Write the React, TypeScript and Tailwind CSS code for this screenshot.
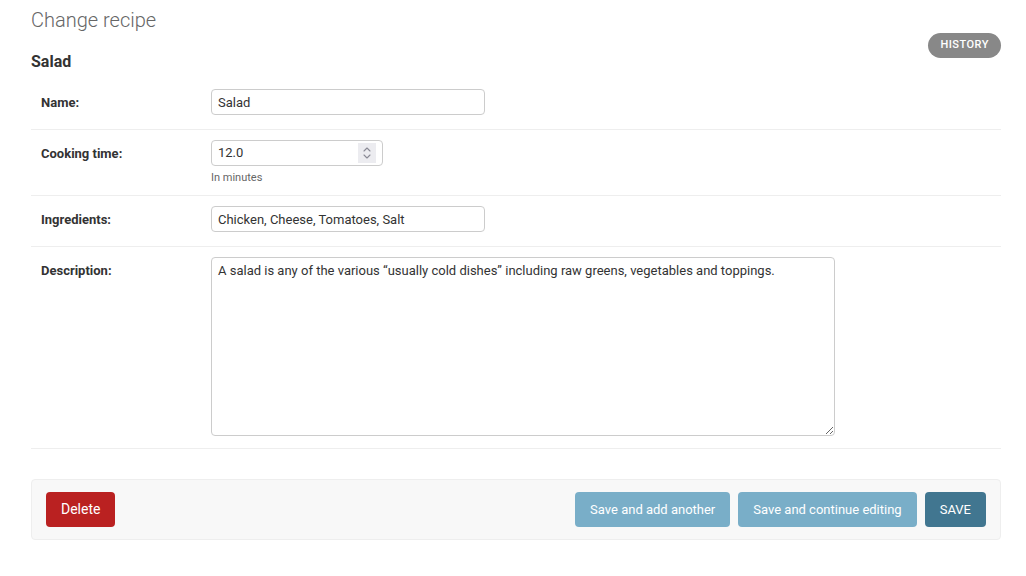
import { useState } from 'react';

const font = { fontFamily: 'Roboto, "Liberation Sans", sans-serif' };

function Row({ label, children, pb = 'pb-[14px]' }: { label: string; children: React.ReactNode; pb?: string }) {
  return (
    <div className={`flex px-[10px] pt-[10px] ${pb} border-b border-[#eee]`}>
      <label className="w-[170px] shrink-0 pt-[6px] text-[13px] font-bold leading-[16px] text-[#333]">{label}</label>
      <div className="flex flex-col">{children}</div>
    </div>
  );
}

export default function App() {
  const [name, setName] = useState('Salad');
  const [time, setTime] = useState('12.0');
  const [ingredients, setIngredients] = useState('Chicken, Cheese, Tomatoes, Salt');
  const [desc, setDesc] = useState(
    'A salad is any of the various \u201cusually cold dishes\u201d including raw greens, vegetables and toppings.'
  );

  const inputCls =
    'h-[26px] rounded-[4px] border border-[#ccc] px-[6px] text-[13px] text-[#333] outline-none bg-white';

  return (
    <div className="min-h-[576px] bg-white pl-[31px] pr-[25px] pt-[8px]" style={font}>
      <h1 className="text-[20px] font-light leading-[24px] text-[#666]">Change recipe</h1>

      <div className="mt-[1px] flex justify-end">
        <button className="h-[25px] rounded-full bg-[#888] px-[12px] text-[11px] font-medium tracking-[0.5px] text-white">
          HISTORY
        </button>
      </div>

      <h2 className="-mt-[6px] text-[16px] font-bold leading-[20px] text-[#333]">Salad</h2>

      <div className="mt-[7px]">
        <Row label="Name:">
          <input className={`${inputCls} w-[274px]`} value={name} onChange={(e) => setName(e.target.value)} />
        </Row>
        <Row label="Cooking time:" pb="pb-[10px]">
          <div className="flex h-[26px] w-[172px] items-center rounded-[4px] border border-[#ccc] bg-white pl-[6px] pr-[6px]">
            <input
              className="w-full text-[13px] text-[#333] outline-none"
              value={time}
              onChange={(e) => setTime(e.target.value)}
            />
            <span className="flex h-[20px] w-[18px] shrink-0 items-center justify-center bg-[#ececf0]">
              <svg width="10" height="14" viewBox="0 0 10 14" fill="none">
                <path d="M2 5l3-3 3 3M2 9l3 3 3-3" stroke="#8a8a95" strokeWidth="1.1" strokeLinecap="round" strokeLinejoin="round" />
              </svg>
            </span>
          </div>
          <p className="mt-[5px] text-[11px] leading-[14px] text-[#666]">In minutes</p>
        </Row>
        <Row label="Ingredients:">
          <input
            className={`${inputCls} w-[274px]`}
            value={ingredients}
            onChange={(e) => setIngredients(e.target.value)}
          />
        </Row>
        <Row label="Description:" pb="pb-[12px]">
          <textarea
            className="block h-[179px] w-[624px] rounded-[4px] border border-[#ccc] px-[6px] py-[5px] text-[13px] leading-[16px] text-[#333] outline-none"
            value={desc}
            onChange={(e) => setDesc(e.target.value)}
          />
        </Row>
      </div>

      <div className="mt-[30px] flex items-center justify-between rounded-[4px] border border-[#eee] bg-[#f8f8f8] px-[14px] py-[12px]">
        <button className="h-[35px] rounded-[4px] bg-[#ba2121] px-[15px] text-[14px] text-white">Delete</button>
        <div className="flex gap-[8px]">
          <button className="h-[35px] rounded-[4px] bg-[#79aec8] px-[15px] text-[13px] text-white">
            Save and add another
          </button>
          <button className="h-[35px] rounded-[4px] bg-[#79aec8] px-[15px] text-[13px] text-white">
            Save and continue editing
          </button>
          <button className="h-[35px] rounded-[4px] bg-[#417690] px-[15px] text-[13px] text-white">SAVE</button>
        </div>
      </div>
    </div>
  );
}
